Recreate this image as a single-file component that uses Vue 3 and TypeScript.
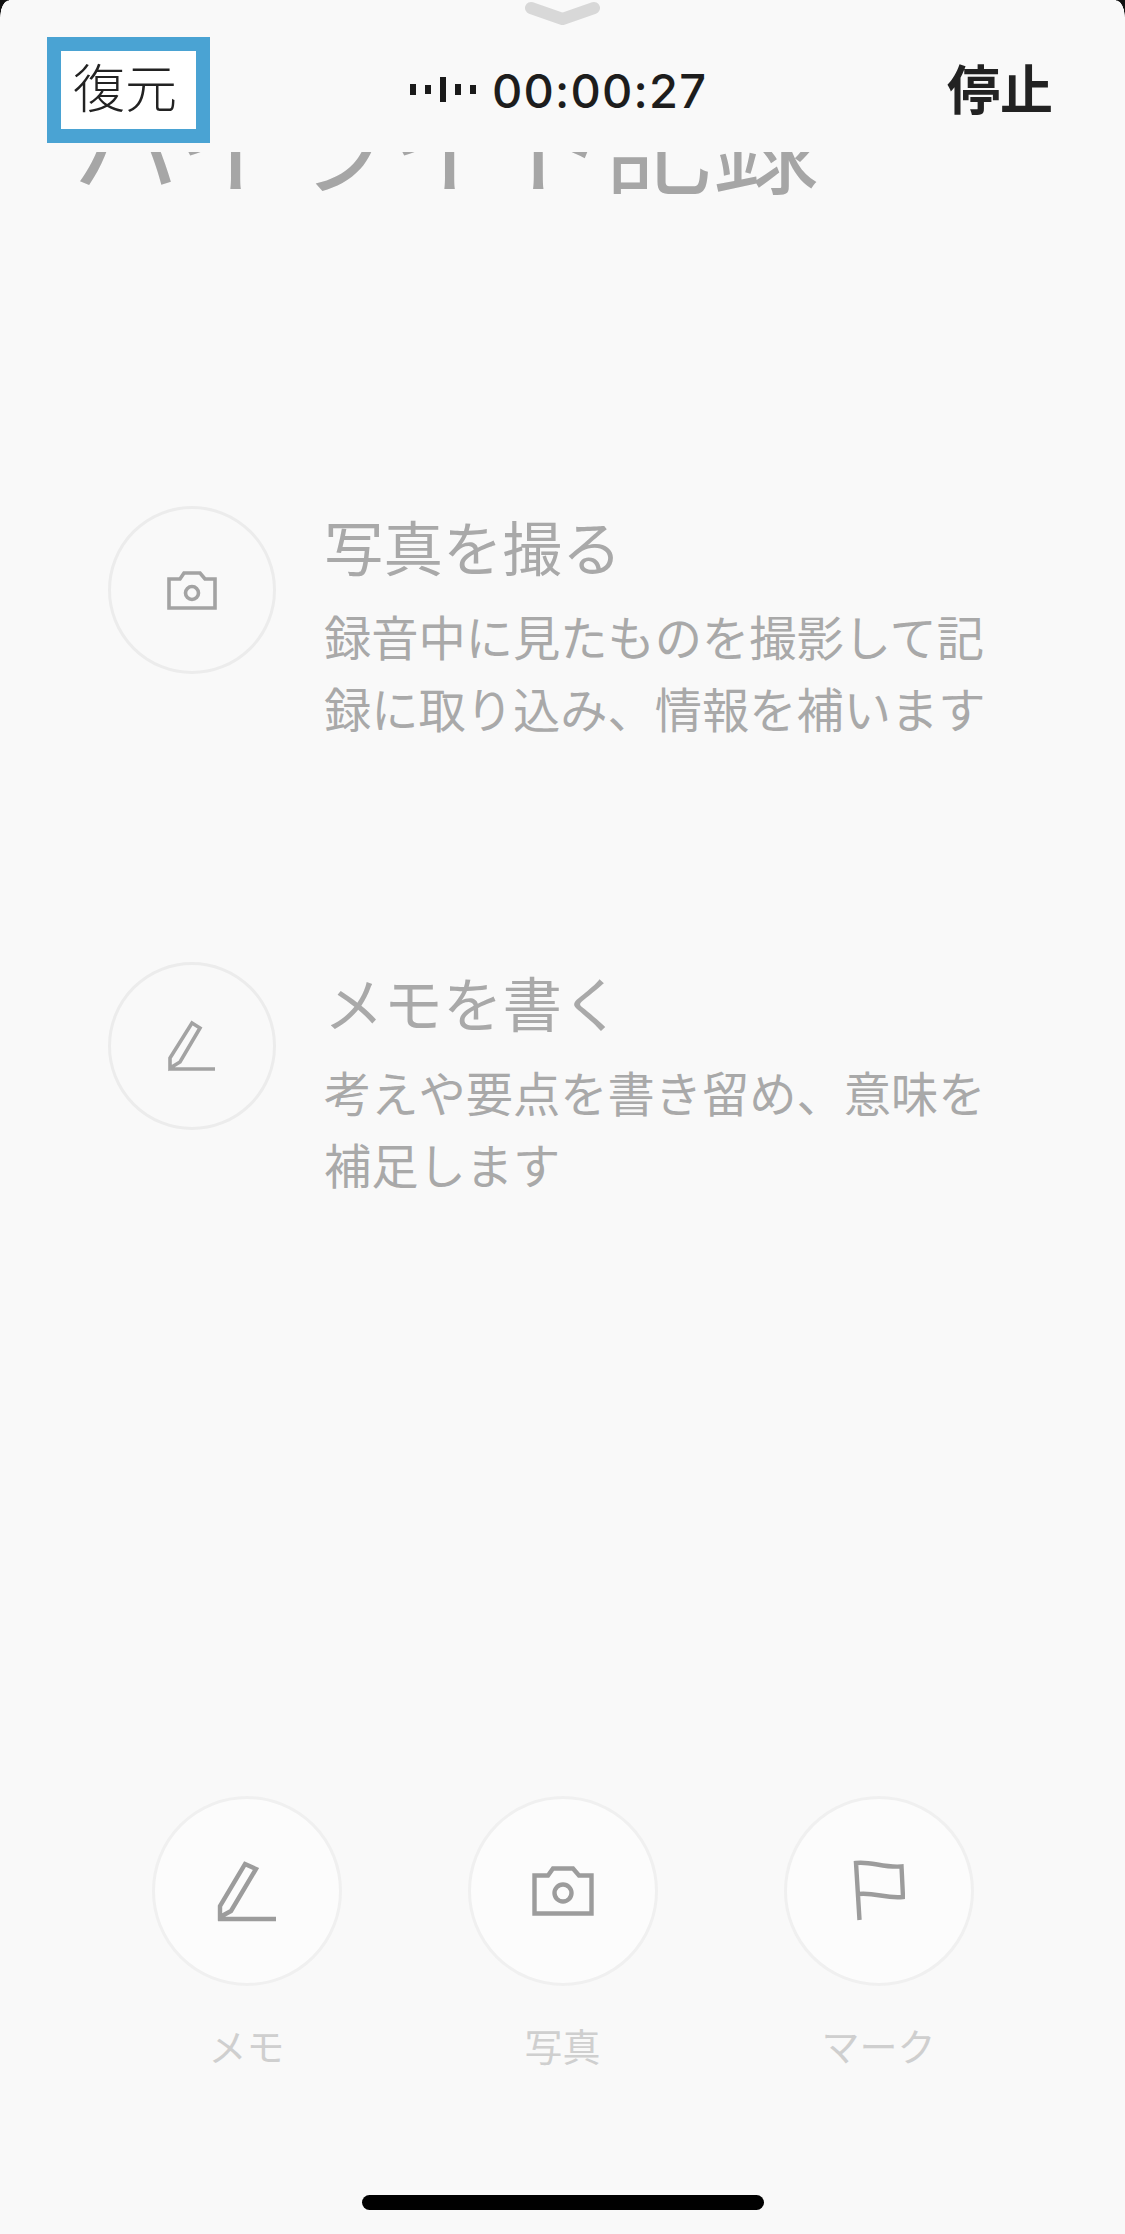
<template>
  <div class="screen">
    <div class="corner corner--left" />
    <div class="corner corner--right" />

    <svg class="grabber" viewBox="0 0 78 28" width="78" height="28">
      <path d="M7 8 L38.5 19 L70 8" fill="none" stroke="#d8d8d8" stroke-width="12" stroke-linecap="round" stroke-linejoin="round" />
    </svg>

    <header class="top-bar">
      <div class="restore-box"><span>復元</span></div>
      <div class="timer">
        <svg class="wave" viewBox="0 0 66 26" width="66" height="26">
          <rect x="0" y="7" width="6" height="11" />
          <rect x="15" y="8" width="6" height="9" />
          <rect x="30" y="0" width="6" height="25" />
          <rect x="45" y="7" width="6" height="11" />
          <rect x="60" y="8" width="6" height="9" />
        </svg>
        <span class="time">00:00:27</span>
      </div>
      <button class="stop">停止</button>
    </header>

    <div class="title-clip">
      <h1 class="page-title">ハイライト記録</h1>
    </div>

    <section class="tips">
      <div v-for="tip in tips" :key="tip.title" class="tip">
        <div class="tip-icon">
          <svg v-if="tip.icon === 'camera'" viewBox="0 0 50 39" width="50" height="39">
            <path d="M2 8 H13 L17 2 H33 L38 8 H48 V37 H2 Z" class="glyph" />
            <circle cx="25" cy="22" r="6.5" class="glyph" />
          </svg>
          <svg v-else viewBox="0 0 50 52" width="50" height="52">
            <path d="M25 3 L33 8 L13 42 L3 48 V38 Z M2 49 H48" class="glyph" />
          </svg>
        </div>
        <div class="tip-text">
          <h2 class="tip-title">{{ tip.title }}</h2>
          <p class="tip-desc">{{ tip.desc }}</p>
        </div>
      </div>
    </section>

    <nav class="actions">
      <div v-for="action in actions" :key="action.label" class="action">
        <div class="action-btn">
          <svg v-if="action.icon === 'pen'" viewBox="0 0 62 62" width="62" height="62">
            <path d="M29 4 L40 9 L15 51 L4 57 V46 Z M2 59 H60" class="glyph glyph--dark" />
          </svg>
          <svg v-else-if="action.icon === 'camera'" viewBox="0 0 62 50" width="62" height="50">
            <path d="M2.5 9.5 H16 L21 2.5 H41 L47 9.5 H59.5 V47.5 H2.5 Z" class="glyph glyph--dark" />
            <circle cx="31" cy="27" r="8.5" class="glyph glyph--dark" />
          </svg>
          <svg v-else viewBox="0 0 52 62" width="52" height="62">
            <path d="M6.5 60 L3 3 C18 1 30 8 48.5 6.5 L50 37 C33 39 22 32 5 34" class="glyph glyph--dark" />
          </svg>
        </div>
        <span class="action-label">{{ action.label }}</span>
      </div>
    </nav>

    <div class="home-bar" />
  </div>
</template>

<script setup lang="ts">
interface Tip {
  icon: string
  title: string
  desc: string
}

const tips: Tip[] = [
  { icon: 'camera', title: '写真を撮る', desc: '録音中に見たものを撮影して記録に取り込み、情報を補います' },
  { icon: 'pen', title: 'メモを書く', desc: '考えや要点を書き留め、意味を補足します' }
]

const actions = [
  { icon: 'pen', label: 'メモ' },
  { icon: 'camera', label: '写真' },
  { icon: 'flag', label: 'マーク' }
]
</script>

<style scoped>
.screen {
  position: relative;
  width: 1125px;
  height: 2234px;
  overflow: hidden;
  display: flex;
  flex-direction: column;
  background: #f9f9f9;
  font-family: "Noto Sans CJK JP", "Noto Sans", sans-serif;
}

.corner {
  position: absolute;
  top: 0;
  width: 9px;
  height: 17px;
  background: radial-gradient(ellipse 9px 17px at 100% 100%, transparent 94%, #111 100%);
}

.corner--left {
  left: 0;
}

.corner--right {
  right: 0;
  transform: scaleX(-1);
}

.grabber {
  position: absolute;
  top: 0;
  left: 524px;
}

.top-bar {
  display: flex;
  align-items: center;
  height: 106px;
  margin-top: 37px;
  padding: 0 72px 0 47px;
}

.restore-box {
  box-sizing: border-box;
  width: 163px;
  height: 106px;
  padding: 0 7px 8px 0;
  border: 14px solid #4aa3d3;
  background: #fff;
  display: flex;
  align-items: center;
  justify-content: center;
}

.restore-box span {
  font-size: 52px;
  font-weight: 300;
  color: #222;
  line-height: 1;
}

.timer {
  display: flex;
  align-items: center;
  gap: 16px;
  margin-left: 200px;
}

.wave {
  fill: #1a1a1a;
}

.time {
  font-family: Inter, "Liberation Sans", sans-serif;
  font-size: 47px;
  font-weight: 500;
  color: #1d1d1d;
  letter-spacing: 1.2px;
}

.stop {
  margin-left: auto;
  border: none;
  background: none;
  padding: 0 0 5px;
  font: inherit;
  font-size: 53px;
  font-weight: 700;
  color: #222;
  line-height: 1;
}

.title-clip {
  height: 53px;
  margin-top: 9px;
  overflow: hidden;
  display: flex;
  align-items: flex-end;
  padding-left: 72px;
}

.page-title {
  margin: 0;
  flex-shrink: 0;
  font-size: 107px;
  font-weight: 400;
  line-height: 130px;
  color: #a6a6a6;
}

.tips {
  display: flex;
  flex-direction: column;
  gap: 218px;
  padding: 301px 120px 0 108px;
}

.tip {
  display: flex;
  gap: 48px;
}

.tip-icon {
  flex-shrink: 0;
  box-sizing: border-box;
  width: 168px;
  height: 168px;
  border: 3px solid #ececec;
  border-radius: 50%;
  display: flex;
  align-items: center;
  justify-content: center;
}

.tip-title {
  margin: -3px 0 0;
  font-size: 59.5px;
  font-weight: 400;
  line-height: 84px;
  color: #a9a9a9;
}

.tip-desc {
  margin: 13px 0 0;
  font-size: 47.25px;
  font-weight: 400;
  line-height: 72px;
  color: #a9a9a9;
}

.glyph {
  fill: none;
  stroke: #a3a3a3;
  stroke-width: 3.6;
}

.glyph--dark {
  stroke: #9c9c9c;
  stroke-width: 4.4;
}

.actions {
  display: flex;
  justify-content: center;
  gap: 126px;
  margin-top: auto;
  margin-bottom: 164px;
}

.action {
  display: flex;
  flex-direction: column;
  align-items: center;
  gap: 34px;
}

.action-btn {
  box-sizing: border-box;
  width: 190px;
  height: 190px;
  border: 3px solid #f0f0f0;
  border-radius: 50%;
  background: #fcfcfc;
  display: flex;
  align-items: center;
  justify-content: center;
}

.action-label {
  font-size: 38px;
  font-weight: 400;
  line-height: 50px;
  color: #cfcfcf;
}

.home-bar {
  position: absolute;
  left: 362px;
  bottom: 24px;
  width: 402px;
  height: 15px;
  border-radius: 8px;
  background: #000;
}
</style>

<style>
html, body {
  margin: 0;
  background: #f9f9f9;
}
</style>
